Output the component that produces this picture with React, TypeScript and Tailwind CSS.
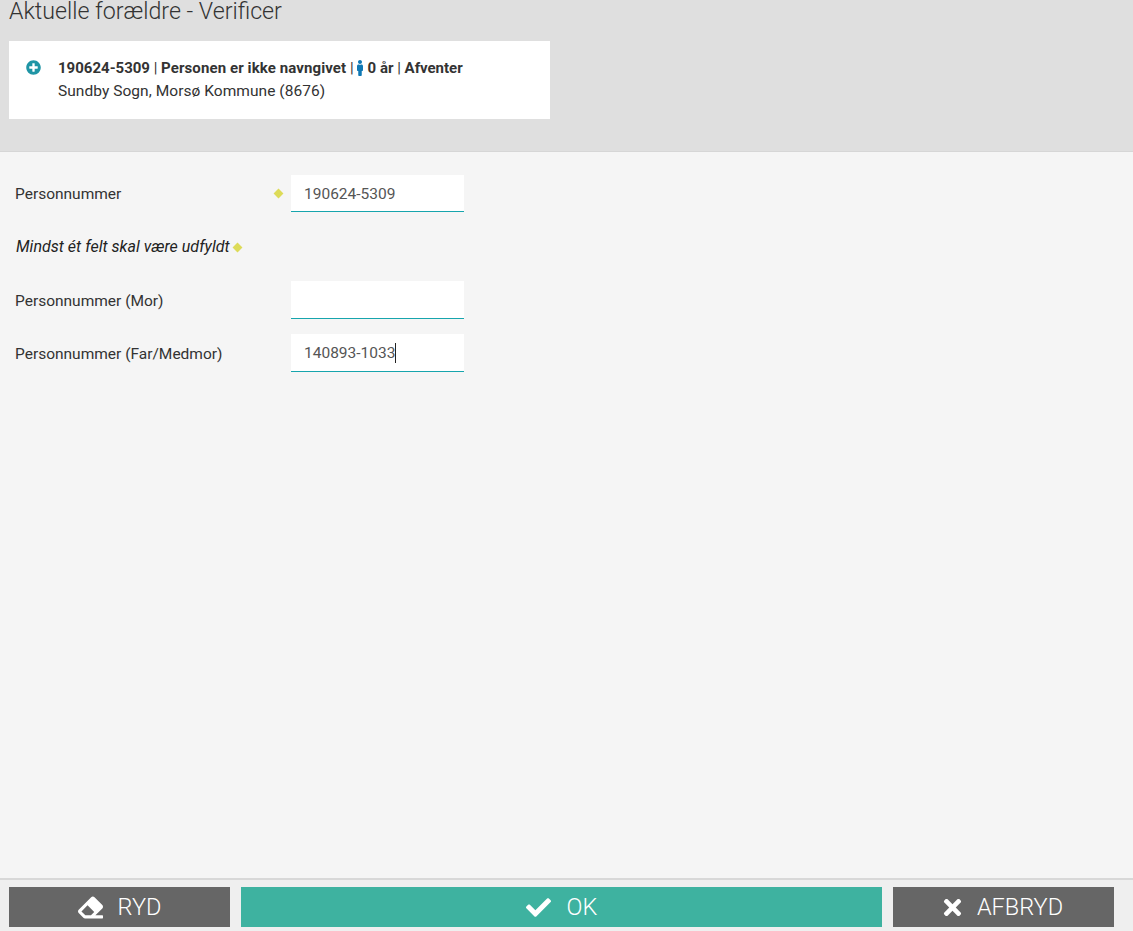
import React from 'react';
import { FaCheck, FaEraser, FaMale, FaPlusCircle, FaTimes } from 'react-icons/fa';

const Marker: React.FC = () => (
  <span className="block w-[7px] h-[7px] rotate-45 bg-[#dddb58]"></span>
);

interface FieldRowProps {
  label: string;
  value?: string;
  required?: boolean;
  caret?: boolean;
  className?: string;
  labelClassName: string;
  boxClassName: string;
}

const FieldRow: React.FC<FieldRowProps> = ({ label, value, required, caret, className, labelClassName, boxClassName }) => (
  <div className={`flex items-center ${className ?? ''}`}>
    <div className={`w-[260px] text-[15.5px] text-[#333333] ${labelClassName}`}>{label}</div>
    <div className="w-[16px] flex items-center">{required && <Marker />}</div>
    <div className={`w-[173px] bg-white border-b border-[#17a5ad] pl-[13px] flex items-center text-[15.5px] text-[#555555] ${boxClassName}`}>
      {value}
      {caret && <span className="inline-block w-px h-[20px] -mt-[3px] bg-[#222222]"></span>}
    </div>
  </div>
);

interface FooterButtonProps {
  label: string;
  icon: React.ReactNode;
  className: string;
}

const FooterButton: React.FC<FooterButtonProps> = ({ label, icon, className }) => (
  <button className={`h-10 flex items-center justify-center text-white text-[23.5px] font-light ${className}`}>
    {icon}
    <span className="pt-[2px]">{label}</span>
  </button>
);

export default function App() {
  return (
    <div className="w-[1133px] h-[931px] overflow-hidden flex flex-col bg-[#f5f5f5] font-['Roboto',sans-serif]">
      <header className="h-[152px] shrink-0 bg-[#dfdfdf] border-b border-[#d6d6d6] pl-[9px]">
        <h1 className="h-[41px] text-[23.2px] leading-[23px] font-light text-[#333333]">Aktuelle forældre - Verificer</h1>
        <div className="w-[541px] h-[78px] bg-white flex items-start pl-[17px] pt-[17px]">
          <FaPlusCircle className="mt-[2px] text-[15px] text-[#1f95a5]" />
          <div className="ml-[17px] text-[15px] text-[#333333]">
            <div className="h-[20px] leading-[20px] flex items-center whitespace-pre">
              <b className="font-bold">190624-5309</b> | <b className="font-bold tracking-[0.1px]">Personen er ikke navngivet</b>{' | '}
              <FaMale className="text-[16px] text-[#0f78b4] -ml-[5px] -mr-[4.5px]" />
              <b className="font-bold"> 0 år</b> | <b className="font-bold">Afventer</b>
            </div>
            <div className="mt-[3px] leading-[20px] text-[15.5px] tracking-[0.05px]">Sundby Sogn, Morsø Kommune (8676)</div>
          </div>
        </div>
      </header>

      <main className="flex-1 pl-[15px] pt-[23px]">
        <FieldRow label="Personnummer" value="190624-5309" required labelClassName="pt-[2px]" boxClassName="h-[37px] pt-[4px]" />
        <div className="mt-[25px] h-[20px] flex items-center gap-[4px] text-[16px] italic tracking-[0.03px] text-[#222222] pl-[1px]">
          Mindst ét felt skal være udfyldt
          <Marker />
        </div>
        <FieldRow label="Personnummer (Mor)" className="mt-[24px]" labelClassName="pt-[4px]" boxClassName="h-[38px]" />
        <FieldRow label="Personnummer (Far/Medmor)" value="140893-1033" caret className="mt-[15px]" labelClassName="pt-[4px]" boxClassName="h-[38px] pt-[3px]" />
      </main>

      <footer className="h-[53px] shrink-0 bg-[#efefef] border-t-2 border-[#d8d8d8] pt-[7px] pl-[9px] flex items-start">
        <FooterButton
          label="RYD"
          icon={<FaEraser className="text-[25px] mr-[15px]" />}
          className="w-[221px] bg-[#666666]"
        />
        <FooterButton
          label="OK"
          icon={<FaCheck className="text-[25px] mr-[16px]" />}
          className="ml-[11px] w-[641px] bg-[#3eb2a0]"
        />
        <FooterButton
          label="AFBRYD"
          icon={<FaTimes className="text-[25px] mr-[12px]" />}
          className="ml-[11px] w-[221px] bg-[#666666] pr-[4px]"
        />
      </footer>
    </div>
  );
}
